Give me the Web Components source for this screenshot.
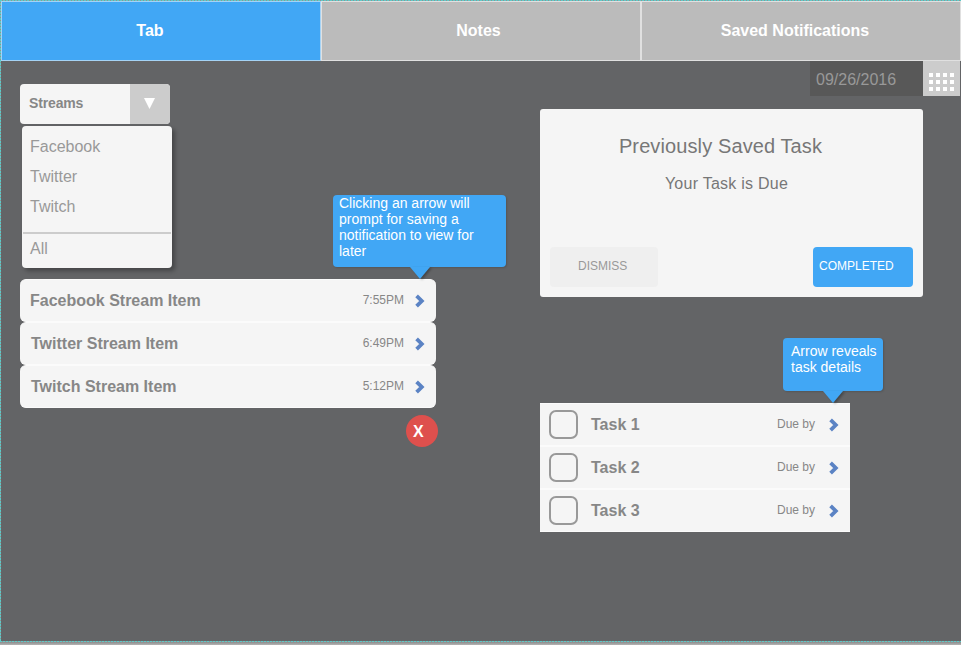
<!DOCTYPE html>
<html lang="en">
<head>
<meta charset="utf-8">
<title>Streams and Tasks</title>
<style>
html,body{margin:0;height:645px;overflow:hidden}
body{background:#aaa;font-family:"Liberation Sans",Arial,sans-serif}
</style>
</head>
<body>
<stream-dashboard></stream-dashboard>
<script>
function define(name, html, ready) {
  const t = document.createElement('template');
  t.innerHTML = html;
  customElements.define(name, class extends HTMLElement {
    constructor() {
      super();
      this.attachShadow({mode: 'open'}).append(t.content.cloneNode(true));
    }
    connectedCallback() { if (ready) ready(this); }
  });
}

define('tab-item', `<style>
:host{box-sizing:border-box;flex:0 0 320px;height:60px;border:1px solid #e0e0e0;background:#bbb;color:#fff;font:bold 16px/57px "Liberation Sans",sans-serif;text-align:center;padding-right:var(--shift,5px);white-space:nowrap}
:host([active]){background:#41a7f5;border-color:#a5d3f5}
</style><slot></slot>`);

define('chevron-icon', `<style>:host{display:block;width:10px;height:14px}svg{display:block}</style>
<svg width="10" height="14" viewBox="0 0 10 14"><path d="M1.6 1.9 6.8 7 1.6 12.1" fill="none" stroke="#5b83c4" stroke-width="3.8"/></svg>`);

define('select-box', `<style>
:host{display:flex;width:150px;height:40px;border-radius:4px;overflow:hidden;background:#f5f5f5;color:#878787;font:bold 14px/38px "Liberation Sans",sans-serif}
span{flex:1;padding-left:9px;letter-spacing:-.15px}
i{width:40px;background:#ccc;display:flex;align-items:center;justify-content:center}
svg{display:block;margin-right:1px;margin-top:-1px}
</style><span><slot></slot></span><i><svg width="11" height="11"><path d="M0 0H11L5.5 11Z" fill="#fff"/></svg></i>`);

define('menu-panel', `<style>
:host{box-sizing:border-box;display:block;width:150px;height:142px;margin:2px 0 0 2px;padding:6px 1px 0;border-radius:4px;background:#f5f5f5;box-shadow:3px 3px 4px rgba(0,0,0,.3);color:#999;font-size:16px;line-height:30px}
hr{border:0;height:2px;background:#ccc;margin:10px 0 0}
::slotted(*){display:block;padding-left:7px}
</style><slot></slot><hr><slot name="last"></slot>`);

define('stream-item', `<style>
:host{box-sizing:border-box;display:flex;width:416px;height:43px;padding:0 10px 0 var(--inset,11px);border:solid #fbfbfb;border-width:1px 0;border-radius:6px;background:#f5f5f5;color:#878787;font:bold 16px/41px "Liberation Sans",sans-serif}
span{flex:1}
small{font:12px/40px "Liberation Sans",sans-serif}
chevron-icon{margin:14px 1px 0 11px}
</style><span><slot></slot></span><small></small><chevron-icon></chevron-icon>`,
e => { e.shadowRoot.querySelector('small').textContent = e.getAttribute('time'); });

define('task-item', `<style>
:host{box-sizing:border-box;display:flex;width:310px;height:43px;padding:0 10px 0 9px;border:solid #fbfbfb;border-width:1px 0;background:#f5f5f5;color:#878787;font:bold 16px/41px "Liberation Sans",sans-serif}
b{box-sizing:border-box;width:29px;height:29px;margin:6px 13px 0 0;border:2px solid #999;border-radius:7px}
span{flex:1}
small{font:12px/40px "Liberation Sans",sans-serif}
chevron-icon{margin:14px 1px 0 14px}
</style><b></b><span><slot></slot></span><small>Due by</small><chevron-icon></chevron-icon>`);

define('tip-bubble', `<style>
:host{box-sizing:border-box;position:absolute;border-radius:4px;background:#41a7f5;color:#fff;font-size:14px;line-height:16px;white-space:pre;box-shadow:1px 1px 2px rgba(0,0,0,.15)}
svg{position:absolute;top:100%;left:var(--tail);filter:drop-shadow(2px 1px 1px rgba(0,0,0,.3))}
</style><slot></slot><svg width="20" height="12"><path d="M0 0H20L10 12Z" fill="#41a7f5"/></svg>`);

define('date-field', `<style>
:host{display:flex;width:150px;height:35px;margin-left:270px}
span{flex:1;padding-left:6px;background:#585858;color:#999;font-size:16px;line-height:37px}
i{box-sizing:border-box;width:37px;height:35px;padding:12px 0 0 6px;background:#ccc}
span{height:35px}
svg{display:block}
</style><span><slot></slot></span><i><svg width="25" height="18" fill="#fff"><path d="M0 0h4v4H0zM7 0h4v4H7zM14 0h4v4H14zM21 0h4v4H21zM0 7h4v4H0zM7 7h4v4H7zM14 7h4v4H14zM21 7h4v4H21zM0 14h4v4H0zM7 14h4v4H7zM14 14h4v4H14zM21 14h4v4H21z"/></svg></i>`);

define('task-card', `<style>
:host{box-sizing:border-box;display:flex;flex-direction:column;width:383px;height:188px;margin-top:13px;padding:25px 10px 10px;border-radius:3px;background:#f5f5f5;color:#777;text-align:center}
h2{margin:0;font:20px/24px "Liberation Sans",sans-serif;padding-right:22px;letter-spacing:.11px}
p{margin:16px 10px 0 0;font-size:16px;line-height:20px;letter-spacing:.25px}
footer{display:flex;justify-content:space-between;margin-top:auto}
footer ::slotted(*){flex:none}
</style><h2><slot name="title"></slot></h2><p><slot></slot></p><footer><slot name="actions"></slot></footer>`);

define('push-button', `<style>
:host{box-sizing:border-box;display:block;width:108px;height:40px;border-radius:4px;background:#efefef;color:#999;font-size:12px;line-height:39px;text-align:left;padding-left:28px}
:host([primary]){width:100px;background:#41a7f5;color:#fff;padding-left:6px;line-height:38px}
</style><slot></slot>`);

define('round-button', `<style>
:host{box-sizing:border-box;display:block;width:32px;height:32px;margin:7px 0 0 386px;padding-left:7px;border-radius:50%;background:#de504d;color:#fff;font:bold 16px/33px "Liberation Sans",sans-serif}
</style><slot></slot>`);

define('stream-dashboard', `<style>
:host{display:block;width:961px;height:645px;background:linear-gradient(#8c8c8c,#b4b4b4) 0 642px/100% 3px no-repeat}
.frame{box-sizing:border-box;height:642px;padding:1px 0 0 1px;background:repeating-linear-gradient(90deg,#5ccac8 0 2px,#929292 2px 3px) 0 0/100% 1px no-repeat,repeating-linear-gradient(90deg,#5ccac8 0 2px,#929292 2px 3px) 0 100%/100% 1px no-repeat,repeating-linear-gradient(#5ccac8 0 2px,#929292 2px 3px) 0 0/1px 100% no-repeat,#636466}
nav{display:flex;width:960px}
main{display:grid;grid-template-columns:520px 420px;padding-left:19px}
.left{position:relative;padding-top:23px}
.streams{margin-top:11px}
.right{position:relative}
.tasks{margin-top:106px}
.t1{left:313px;top:134px;width:173px;height:72px;padding:0 6px;--tail:77px}
.t2{left:243px;top:277px;width:100px;height:53px;padding:5px 0 0 8px;--tail:40px}
</style>
<div class="frame">
<nav><tab-item active style="--shift:22px">Tab</tab-item><tab-item>Notes</tab-item><tab-item style="--shift:12px">Saved Notifications</tab-item></nav>
<main>
<section class="left"><select-box>Streams</select-box>
<menu-panel><span>Facebook</span><span>Twitter</span><span>Twitch</span><span slot="last">All</span></menu-panel>
<div class="streams"><stream-item time="7:55PM" style="--inset:10px">Facebook Stream Item</stream-item><stream-item time="6:49PM">Twitter Stream Item</stream-item><stream-item time="5:12PM">Twitch Stream Item</stream-item></div>
<round-button>X</round-button>
<tip-bubble class="t1">Clicking an arrow will
prompt for saving a
notification to view for
later</tip-bubble></section>
<section class="right"><date-field>09/26/2016</date-field>
<task-card><span slot="title">Previously Saved Task</span>Your Task is Due<push-button slot="actions">DISMISS</push-button><push-button slot="actions" primary>COMPLETED</push-button></task-card>
<div class="tasks"><task-item>Task 1</task-item><task-item>Task 2</task-item><task-item>Task 3</task-item></div>
<tip-bubble class="t2">Arrow reveals
task details</tip-bubble></section>
</main></div>`);
</script>
</body>
</html>
